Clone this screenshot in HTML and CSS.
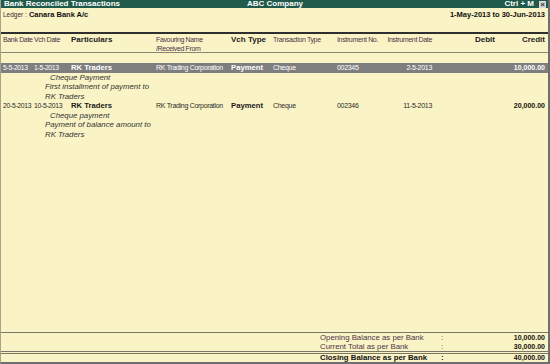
FILE: index.html
```html
<!DOCTYPE html>
<html lang="en">
<head>
  <meta charset="UTF-8">
  <title>Bank Reconciled Transactions</title>
  <link rel="stylesheet" href="styles.css">
</head>
<body>
  <div class="window">
    <div class="titlebar">
      <span class="title-left">Bank Reconciled Transactions</span>
      <span class="title-mid">ABC Company</span>
      <span class="title-right">Ctrl + M <span class="close-box">&#215;</span></span>
    </div>

    <div class="ledger">
      <div><span class="lbl">Ledger :</span> <b>Canara Bank A/c</b></div>
      <div class="period">1-May-2013 to 30-Jun-2013</div>
    </div>

    <div class="cols head">
      <div>Bank Date</div>
      <div>Vch Date</div>
      <div class="strong">Particulars</div>
      <div>Favouring Name<br>/Received From</div>
      <div class="strong">Vch Type</div>
      <div>Transaction Type</div>
      <div>Instrument No.</div>
      <div class="right">Instrument Date</div>
      <div class="right strong">Debit</div>
      <div class="right strong">Credit</div>
    </div>

    <div class="list">
      <div class="entry">
        <div class="cols row selected">
          <div class="date">5-5-2013</div>
          <div class="date">1-5-2013</div>
          <div class="strong">RK Traders</div>
          <div class="small">RK Trading Corporation</div>
          <div class="strong">Payment</div>
          <div class="small">Cheque</div>
          <div class="small">002345</div>
          <div class="right small">2-5-2013</div>
          <div></div>
          <div class="right amount">10,000.00</div>
        </div>
        <div class="narration">
          <div class="indent">Cheque Payment</div>
          <div>First installment of payment to</div>
          <div>RK Traders</div>
        </div>
      </div>

      <div class="entry">
        <div class="cols row">
          <div class="date">20-5-2013</div>
          <div class="date">10-5-2013</div>
          <div class="strong">RK Traders</div>
          <div class="small">RK Trading Corporation</div>
          <div class="strong">Payment</div>
          <div class="small">Cheque</div>
          <div class="small">002346</div>
          <div class="right small">11-5-2013</div>
          <div></div>
          <div class="right amount">20,000.00</div>
        </div>
        <div class="narration">
          <div class="indent">Cheque payment</div>
          <div>Payment of balance amount to</div>
          <div>RK Traders</div>
        </div>
      </div>
    </div>

    <div class="summary">
      <div class="sum-row">
        <span class="sum-label">Opening Balance as per Bank</span>
        <span class="sum-colon">:</span>
        <span class="sum-value">10,000.00</span>
      </div>
      <div class="sum-row">
        <span class="sum-label">Current Total as per Bank</span>
        <span class="sum-colon">:</span>
        <span class="sum-value">30,000.00</span>
      </div>
      <div class="sum-row closing">
        <span class="sum-label">Closing Balance as per Bank</span>
        <span class="sum-colon">:</span>
        <span class="sum-value">40,000.00</span>
      </div>
    </div>
  </div>
</body>
</html>
```

FILE: styles.css
```css
body {
  margin: 0;
  background: #faf3c6;
  font-family: 'Liberation Sans', Arial, sans-serif;
  color: #2c2c2c;
  overflow: hidden;
}
.window {
  width: 550px;
  height: 364px;
  box-sizing: border-box;
  display: flex;
  flex-direction: column;
  border-left: 1px solid #a8a38a;
  border-right: 2px solid #6e6e6e;
  border-bottom: 2px solid #6e6e6e;
}
.titlebar {
  height: 8px;
  background: #1f5a4a;
  color: #fff;
  font-weight: bold;
  font-size: 8px;
  line-height: 8px;
  display: flex;
  justify-content: space-between;
  align-items: center;
  padding: 0 2px 0 3px;
}
.title-left {
  width: 180px;
}
.title-right {
  width: 180px;
  display: flex;
  justify-content: flex-end;
  align-items: center;
  gap: 5px;
}
.close-box {
  width: 7px;
  height: 7px;
  background: #d8d8d8;
  color: #333;
  font-size: 8px;
  line-height: 7px;
  text-align: center;
}
.ledger {
  height: 24px;
  display: flex;
  justify-content: space-between;
  padding: 2px 3px 0 2px;
  box-sizing: border-box;
  font-size: 7.5px;
  line-height: 9px;
  color: #111;
}
.ledger .lbl {
  font-size: 6.5px;
  color: #3a2a3a;
}
.ledger b {
  font-weight: bold;
}
.period {
  font-weight: bold;
}
.cols {
  display: grid;
  grid-template-columns: 31px 37px 85px 75px 42px 64px 46px 49px 63px 50px;
  padding: 0 3px 0 2px;
  white-space: nowrap;
}
.head {
  border-top: 2px solid #2e2e2e;
  border-bottom: 1px solid #8a8676;
  height: 17px;
  padding-top: 1px;
  font-size: 7px;
  letter-spacing: -0.35px;
  line-height: 9px;
  color: #4a3448;
}
.head .strong {
  font-size: 8px;
  letter-spacing: 0;
  color: #222;
}
.strong {
  font-weight: bold;
  font-size: 7.7px;
  color: #1a1a1a;
}
.right {
  text-align: right;
}
.list {
  flex: 1;
  padding-top: 10px;
}
.row {
  line-height: 9.5px;
  font-size: 7px;
}
.row .date {
  font-size: 6.8px;
  letter-spacing: -0.3px;
}
.row .small {
  letter-spacing: -0.3px;
}
.row .amount {
  font-weight: bold;
  font-size: 7px;
  color: #111;
}
.selected {
  background: #7e7e7e;
  color: #fff;
}
.selected .strong,
.selected .amount {
  color: #fff;
}
.narration {
  padding-left: 44px;
  font-style: italic;
  font-size: 7.8px;
  line-height: 9.5px;
  color: #333;
}
.narration .indent {
  padding-left: 5px;
}
.summary {
  border-top: 1px solid #7a7766;
  font-size: 7.8px;
  color: #4a3448;
}
.sum-row {
  display: flex;
  height: 9px;
  line-height: 9px;
  padding: 0 3px 0 319px;
}
.sum-label {
  width: 121px;
}
.sum-colon {
  width: 20px;
}
.sum-value {
  flex: 1;
  text-align: right;
  font-weight: bold;
  font-size: 7px;
  color: #111;
}
.closing {
  border-top: 3px double #7a7766;
  height: 8px;
  line-height: 8px;
  font-weight: bold;
  color: #111;
}
```
